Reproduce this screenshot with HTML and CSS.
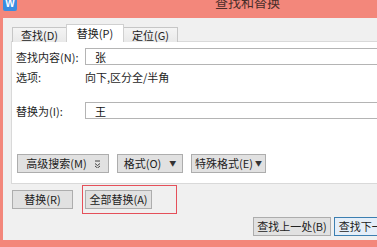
FILE: index.html
```html
<!DOCTYPE html>
<html lang="zh-CN">
<head>
    <meta charset="UTF-8">
    <title>查找和替换</title>
    <link rel="stylesheet" href="styles.css">
</head>
<body>

    <div class="window">
        <div class="titlebar">
            <span class="app-icon">W</span>
            <span class="title">查找和替换</span>
        </div>

        <div class="dialog">
            <!-- 选项卡 -->
            <div class="tabs">
                <div class="tab tab-find">查找(D)</div>
                <div class="tab tab-replace active">替换(P)</div>
                <div class="tab tab-goto">定位(G)</div>
            </div>

            <div class="panel">
                <div class="row">
                    <label class="field-label" for="findText">查找内容(N):</label>
                    <input class="field" type="text" id="findText" value="张">
                </div>

                <div class="row row-options">
                    <span class="field-label">选项:</span>
                    <span>向下,区分全/半角</span>
                </div>

                <div class="row row-replace">
                    <label class="field-label" for="replaceText">替换为(I):</label>
                    <input class="field" type="text" id="replaceText" value="王">
                </div>

                <div class="tool-row">
                    <button class="btn btn-advanced">高级搜索(M)
                        <svg class="dbl-arrow" width="5" height="8" viewBox="0 0 5 8">
                            <path d="M0 1h5M0 3.5l2.5 2 2.5-2M0 6l2.5 2 2.5-2" fill="none" stroke="#444" stroke-width="1"/>
                        </svg>
                    </button>
                    <button class="btn btn-format">格式(O)<span class="caret">▼</span></button>
                    <button class="btn btn-special">特殊格式(E)<span class="caret">▼</span></button>
                </div>
            </div>

            <div class="actions">
                <button class="btn btn-replace">替换(R)</button>
                <div class="highlight">
                    <button class="btn btn-replace-all">全部替换(A)</button>
                </div>
            </div>

            <div class="nav-row">
                <button class="btn btn-nav">查找上一处(B)</button>
                <button class="btn btn-nav default">查找下一处(F)</button>
                <button class="btn btn-close">关闭</button>
            </div>
        </div>
    </div>

</body>
</html>
```

FILE: styles.css
```css
* {
    margin: 0;
    padding: 0;
    box-sizing: border-box;
}

body {
    width: 377px;
    height: 247px;
    overflow: hidden;
    background-color: #f3877b;
    font-family: "Noto Sans CJK SC", "Liberation Sans", sans-serif;
    font-size: 11px;
    color: #1e1e1e;
}

.window {
    width: 495px;
}

/* Thanh tiêu đề */
.titlebar {
    height: 18px;
    display: flex;
    align-items: flex-start;
    overflow: hidden;
}

.app-icon {
    margin-left: 3px;
    width: 14px;
    height: 11px;
    background-color: #3a8de0;
    border-radius: 0 0 2px 2px;
    color: white;
    font: bold 10px "Liberation Sans", sans-serif;
    line-height: 8px;
    text-align: center;
}

.title {
    margin-left: 198px;
    margin-top: -5px;
    font-size: 13px;
    line-height: 14px;
    color: #4a2e2a;
}

.dialog {
    margin-left: 3px;
    height: 222px;
    background-color: #f0f0f0;
    padding-top: 7px;
}

/* Tabs */
.tabs {
    display: flex;
    align-items: flex-end;
    margin-left: 9px;
    height: 17px;
    margin-bottom: -1px;
    position: relative;
}

.tab {
    height: 15px;
    line-height: 14px;
    text-align: center;
    border: 1px solid #c6c6c6;
    border-bottom: none;
    background: linear-gradient(#f4f4f4, #e9e9e9);
    color: #222;
}

.tab-find {
    width: 55px;
}

.tab-replace {
    width: 58px;
}

.tab-goto {
    width: 55px;
}

.tab.active {
    height: 18px;
    line-height: 17px;
    background: white;
    border-color: #d0d0d0;
    margin: 0 -1px;
    position: relative;
}

.panel {
    margin: 0 8px;
    height: 143px;
    background-color: white;
    border: 1px solid #d9d9d9;
    padding: 6px 0 0 4px;
}

.row {
    display: flex;
    align-items: center;
    height: 17px;
}

.field-label {
    width: 69px;
    flex-shrink: 0;
}

.field {
    flex: 1;
    height: 17px;
    border: 1px solid #b4b4b4;
    padding-left: 9px;
    font-family: inherit;
    font-size: 11px;
    color: #111;
    outline: none;
}

.row-options {
    margin-top: 6px;
    height: 12px;
}

.row-replace {
    margin-top: 19px;
}

.tool-row {
    display: flex;
    gap: 8px;
    margin: 35px 0 0 1px;
}

/* Nút */
.btn {
    height: 19px;
    border: 1px solid #adadad;
    background-color: #e1e1e1;
    font-family: inherit;
    font-size: 11px;
    line-height: 17px;
    color: #222;
    text-align: center;
    display: flex;
    align-items: center;
    justify-content: center;
}

.btn-advanced {
    width: 92px;
    gap: 8px;
}

.btn-format {
    width: 66px;
    gap: 8px;
}

.btn-special {
    width: 75px;
    gap: 2px;
}

.caret {
    font-size: 7px;
    color: #333;
}

.actions {
    display: flex;
    align-items: center;
    gap: 9px;
    margin: 1px 0 0 9px;
}

.btn-replace {
    width: 61px;
}

.highlight {
    border: 1px solid #e5505a;
    padding: 4px 24px 4px 2px;
}

.btn-replace-all {
    width: 67px;
}

.nav-row {
    display: flex;
    gap: 3px;
    margin: 3px 0 0 250px;
}

.btn-nav {
    width: 78px;
}

.btn-nav.default {
    border-color: #3c7fb1;
    background-color: #e5eef8;
}

.btn-close {
    width: 65px;
    margin-left: 3px;
}
```
